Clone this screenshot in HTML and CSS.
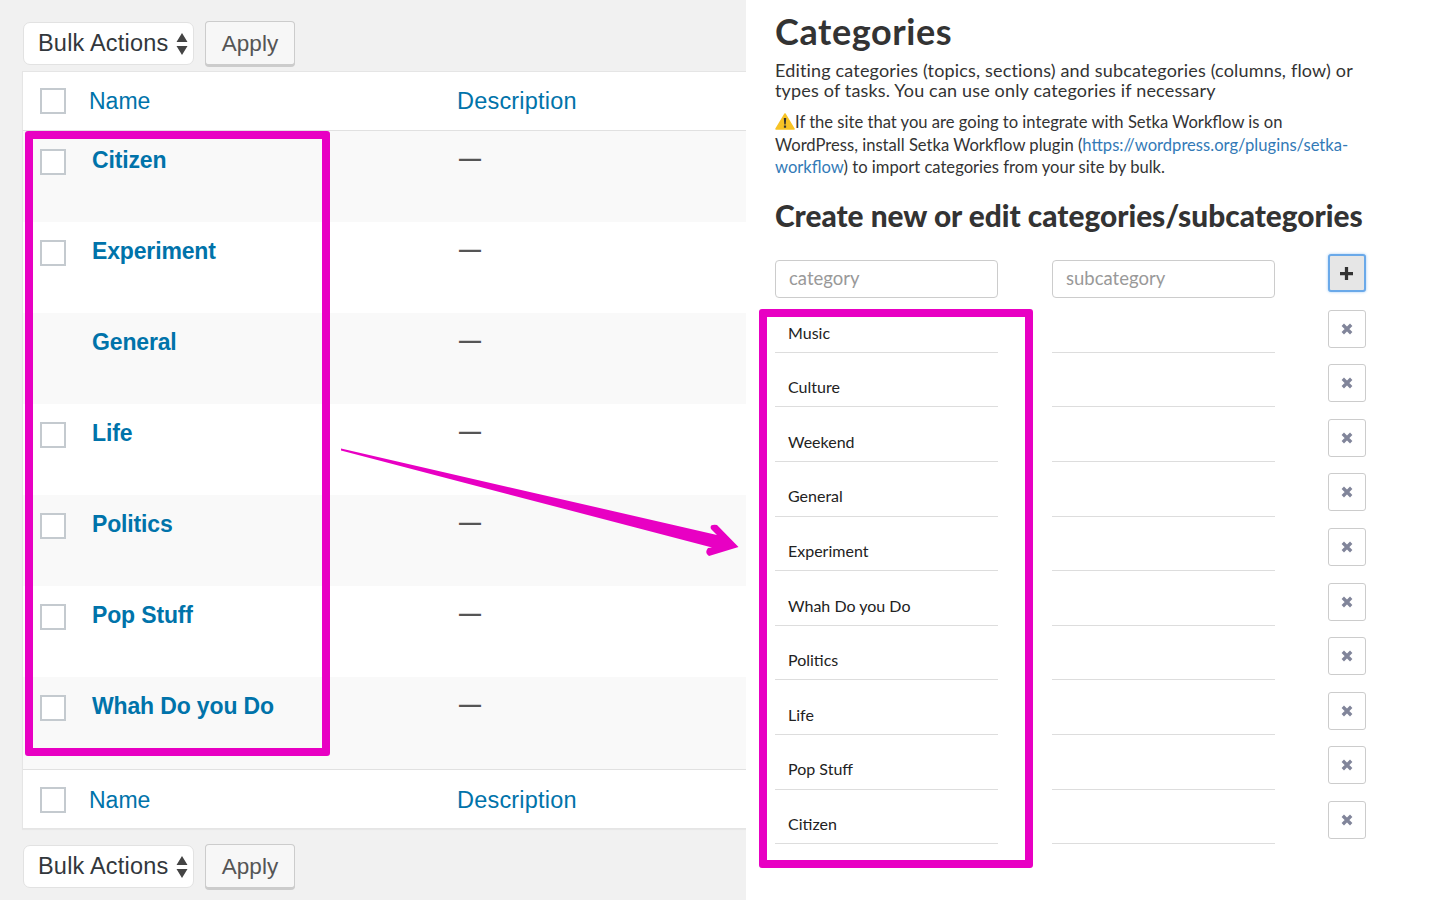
FILE: index.html
```html
<!DOCTYPE html>
<html lang="en">
<head>
    <meta charset="UTF-8">
    <meta name="viewport" content="width=device-width, initial-scale=1.0">
    <title>Categories</title>
    <link rel="stylesheet" href="styles.css">
</head>
<body>
<div class="page">
    <div class="left">
        <div class="toolbar">
            <div class="bulk">Bulk Actions
                <svg class="updown" width="12" height="22" viewBox="0 0 12 22"><path d="M6 0 L11.5 9 H.5 Z M.5 13 H11.5 L6 22 Z" fill="#444"/></svg>
            </div>
            <div class="apply">Apply</div>
        </div>
        <div class="table">
            <div class="row head top">
                <span class="check"></span>
                <a class="col-name">Name</a>
                <a class="col-desc">Description</a>
            </div>
            <div class="row item odd">
                <span class="check"></span>
                <a class="title">Citizen</a>
                <span class="dash">—</span>
            </div>
            <div class="row item">
                <span class="check"></span>
                <a class="title">Experiment</a>
                <span class="dash">—</span>
            </div>
            <div class="row item odd">
                <span class="nocheck"></span>
                <a class="title">General</a>
                <span class="dash">—</span>
            </div>
            <div class="row item">
                <span class="check"></span>
                <a class="title">Life</a>
                <span class="dash">—</span>
            </div>
            <div class="row item odd">
                <span class="check"></span>
                <a class="title">Politics</a>
                <span class="dash">—</span>
            </div>
            <div class="row item">
                <span class="check"></span>
                <a class="title">Pop Stuff</a>
                <span class="dash">—</span>
            </div>
            <div class="row item odd last">
                <span class="check"></span>
                <a class="title">Whah Do you Do</a>
                <span class="dash">—</span>
            </div>
            <div class="row head bottom">
                <span class="check"></span>
                <a class="col-name">Name</a>
                <a class="col-desc">Description</a>
            </div>
        </div>
        <div class="toolbar lower">
            <div class="bulk">Bulk Actions
                <svg class="updown" width="12" height="22" viewBox="0 0 12 22"><path d="M6 0 L11.5 9 H.5 Z M.5 13 H11.5 L6 22 Z" fill="#444"/></svg>
            </div>
            <div class="apply">Apply</div>
        </div>
    </div>

    <div class="right">
        <h1>Categories</h1>
        <p class="intro">Editing categories (topics, sections) and subcategories (columns, flow) or types of tasks. You can use only categories if necessary</p>
        <p class="note"><svg class="warn" width="20" height="17" viewBox="0 0 20 17"><path d="M10 1 L19 16 H1 Z" fill="#f7c325" stroke="#f7c325" stroke-width="1.5" stroke-linejoin="round"/><path d="M8.8 5 H11.2 L10.7 11.5 H9.3 Z M8.9 12.6 H11.1 V14.8 H8.9 Z" fill="#333"/></svg>If the site that you are going to integrate with Setka Workflow is on WordPress, install Setka Workflow plugin (<a href="#">https://wordpress.org/plugins/setka-workflow</a>) to import categories from your site by bulk.</p>
        <h2>Create new or edit categories/subcategories</h2>

        <div class="editor">
            <div class="field">category</div>
            <div class="field">subcategory</div>
            <div class="btn add"><svg width="13" height="13" viewBox="0 0 12 12"><path d="M4.5 0 H7.5 V4.5 H12 V7.5 H7.5 V12 H4.5 V7.5 H0 V4.5 H4.5 Z" fill="#333"/></svg></div>

            <div class="cell">Music</div><div class="cell"></div><div class="btn del"><svg width="12" height="12" viewBox="0 0 10 10"><path d="M1.5 1.5 L8.5 8.5 M8.5 1.5 L1.5 8.5" stroke="#81859a" stroke-width="2.8"/></svg></div>
            <div class="cell">Culture</div><div class="cell"></div><div class="btn del"><svg width="12" height="12" viewBox="0 0 10 10"><path d="M1.5 1.5 L8.5 8.5 M8.5 1.5 L1.5 8.5" stroke="#81859a" stroke-width="2.8"/></svg></div>
            <div class="cell">Weekend</div><div class="cell"></div><div class="btn del"><svg width="12" height="12" viewBox="0 0 10 10"><path d="M1.5 1.5 L8.5 8.5 M8.5 1.5 L1.5 8.5" stroke="#81859a" stroke-width="2.8"/></svg></div>
            <div class="cell">General</div><div class="cell"></div><div class="btn del"><svg width="12" height="12" viewBox="0 0 10 10"><path d="M1.5 1.5 L8.5 8.5 M8.5 1.5 L1.5 8.5" stroke="#81859a" stroke-width="2.8"/></svg></div>
            <div class="cell">Experiment</div><div class="cell"></div><div class="btn del"><svg width="12" height="12" viewBox="0 0 10 10"><path d="M1.5 1.5 L8.5 8.5 M8.5 1.5 L1.5 8.5" stroke="#81859a" stroke-width="2.8"/></svg></div>
            <div class="cell">Whah Do you Do</div><div class="cell"></div><div class="btn del"><svg width="12" height="12" viewBox="0 0 10 10"><path d="M1.5 1.5 L8.5 8.5 M8.5 1.5 L1.5 8.5" stroke="#81859a" stroke-width="2.8"/></svg></div>
            <div class="cell">Politics</div><div class="cell"></div><div class="btn del"><svg width="12" height="12" viewBox="0 0 10 10"><path d="M1.5 1.5 L8.5 8.5 M8.5 1.5 L1.5 8.5" stroke="#81859a" stroke-width="2.8"/></svg></div>
            <div class="cell">Life</div><div class="cell"></div><div class="btn del"><svg width="12" height="12" viewBox="0 0 10 10"><path d="M1.5 1.5 L8.5 8.5 M8.5 1.5 L1.5 8.5" stroke="#81859a" stroke-width="2.8"/></svg></div>
            <div class="cell">Pop Stuff</div><div class="cell"></div><div class="btn del"><svg width="12" height="12" viewBox="0 0 10 10"><path d="M1.5 1.5 L8.5 8.5 M8.5 1.5 L1.5 8.5" stroke="#81859a" stroke-width="2.8"/></svg></div>
            <div class="cell">Citizen</div><div class="cell"></div><div class="btn del"><svg width="12" height="12" viewBox="0 0 10 10"><path d="M1.5 1.5 L8.5 8.5 M8.5 1.5 L1.5 8.5" stroke="#81859a" stroke-width="2.8"/></svg></div>
        </div>
    </div>

    <!-- magenta marks drawn over the screenshot -->
    <div class="mark mark-left"></div>
    <div class="mark mark-right"></div>
    <svg class="arrow" width="420" height="120" viewBox="0 0 420 120">
        <path d="M1 8.5 L377 95 L371 89 Q369 84 377 85 L398.5 107 L369 116 Q364 113 368 108 L372 107.5 L1 10.5 Z" fill="#e800c3"/>
    </svg>
</div>
</body>
</html>
```

FILE: styles.css
```css
*{
    margin: 0;
    padding: 0;
    box-sizing: border-box;
}
body{
    background-color: #fff;
    overflow: hidden;
}
.page{
    width: 1440px;
    height: 900px;
    display: flex;
    position: relative;
    overflow: hidden;
}

/* left side, the wordpress list */
.left{
    width: 746px;
    height: 900px;
    flex-shrink: 0;
    background-color: #f1f1f1;
    padding-top: 21px;
    font-family: "Liberation Sans", Arial, sans-serif;
    overflow: hidden;
}
.toolbar{
    display: flex;
    align-items: flex-start;
    gap: 11px;
    padding-left: 23px;
    height: 50px;
}
.toolbar.lower{
    height: 46px;
    margin-top: 15px;
}
.bulk{
    width: 171px;
    height: 43px;
    margin-top: 1px;
    background-color: #fff;
    border: 1px solid #e2e2e2;
    border-radius: 7px;
    display: flex;
    align-items: center;
    justify-content: space-between;
    padding: 0 5px 0 14px;
    font-size: 23.5px;
    letter-spacing: .2px;
    color: #32373c;
}
.apply{
    width: 90px;
    height: 45px;
    padding-top: 2px;
    background-color: #f7f7f7;
    border: 1px solid #ccc;
    border-bottom-width: 2px;
    border-radius: 4px;
    box-shadow: 0 1px 0 #ccc;
    display: flex;
    align-items: center;
    justify-content: center;
    font-size: 22.5px;
    color: #555;
}
.table{
    width: 724px;
    margin-left: 22px;
    background-color: #fff;
    border: 1px solid #e5e5e5;
    border-right: 0;
    box-shadow: 0 1px 1px rgba(0,0,0,.04);
}
.row{
    display: flex;
    padding-left: 17px;
}
.head{
    align-items: center;
}
.head.top{
    border-bottom: 1px solid #e1e1e1;
    height: 59px;
}
.head.bottom{
    border-top: 1px solid #e1e1e1;
    height: 59px;
    padding-top: 2px;
}
.item{
    height: 91px;
    padding-top: 17px;
}
.item .check{
    margin-top: 1px;
}
.item.last{
    height: 92px;
}
.odd{
    background-color: #f9f9f9;
}
.check, .nocheck{
    width: 26px;
    height: 26px;
    flex-shrink: 0;
}
.check{
    background-color: #fff;
    border: 2px solid #c4cacf;
}
.col-name{
    width: 368px;
    margin-left: 23px;
    font-size: 23px;
    color: #0073aa;
}
.col-desc{
    font-size: 23.5px;
    letter-spacing: .2px;
    color: #0073aa;
}
.title{
    width: 367px;
    margin-left: 26px;
    font-size: 23px;
    letter-spacing: -.15px;
    font-weight: bold;
    line-height: 24px;
    color: #0073aa;
}
.dash{
    font-size: 22px;
    font-weight: bold;
    line-height: 22px;
    color: #555;
}

/* right side, setka settings */
.right{
    flex: 1;
    padding: 11px 0 0 29px;
    font-family: Lato, "Noto Sans", sans-serif;
    color: #333;
}
h1{
    font-size: 36px;
    line-height: 40px;
    font-weight: 700;
    letter-spacing: .6px;
}
.intro{
    width: 590px;
    margin-top: 9px;
    font-size: 18px;
    line-height: 20px;
    letter-spacing: .17px;
}
.note{
    width: 590px;
    margin-top: 11px;
    font-size: 16.6px;
    line-height: 22.5px;
}
.note a{
    color: #337ab7;
    text-decoration: none;
}
.warn{
    vertical-align: -2px;
}
h2{
    margin-top: 20px;
    font-size: 29.8px;
    line-height: 34px;
    font-weight: 900;
    white-space: nowrap;
}
.editor{
    display: grid;
    grid-template-columns: 223px 223px 38px;
    grid-template-rows: 44.8px;
    grid-auto-rows: 54.6px;
    column-gap: 54px;
    margin-top: 21px;
    font-size: 16px;
}
.field{
    height: 38px;
    margin-top: 6px;
    border: 1px solid #ccc;
    border-radius: 4px;
    padding: 7px 13px;
    line-height: 20px;
    font-size: 18.5px;
    color: #999;
}
.cell{
    border-bottom: 1px solid #ddd;
    padding: 24.4px 13px 0;
    line-height: 20px;
    color: #222;
}
.btn{
    width: 38px;
    height: 38px;
    margin-left: -1px;
    border: 1px solid #ccc;
    border-radius: 3px;
    display: flex;
    align-items: center;
    justify-content: center;
}
.add{
    padding: 2px 2px 0 0;
    background-color: #e6e6e6;
    border: 2px solid #6aa9e9;
    box-shadow: 0 0 3px #9ecaf5;
}
.del{
    margin-top: 11.4px;
    background-color: #fff;
}

/* annotations */
.mark{
    position: absolute;
    border: 8px solid #e800c3;
    border-radius: 3px;
}
.mark-left{
    left: 25px;
    top: 131px;
    width: 305px;
    height: 625px;
}
.mark-right{
    left: 759px;
    top: 309px;
    width: 274px;
    height: 559px;
}
.arrow{
    position: absolute;
    left: 340px;
    top: 440px;
}
```
